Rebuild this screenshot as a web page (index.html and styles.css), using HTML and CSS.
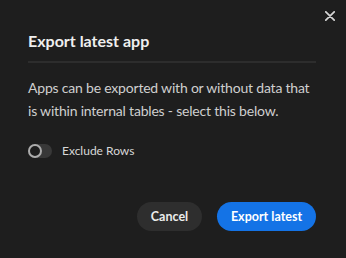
FILE: index.html
```html
<!DOCTYPE html>
<html lang="en">
<head>
    <meta charset="UTF-8">
    <meta name="viewport" content="width=device-width, initial-scale=1.0">
    <title>Export latest app</title>
    <link rel="stylesheet" href="styles.css">
</head>
<body>
    <div class="dialog">
        <!-- close -->
        <button class="close-btn" aria-label="Close">
            <svg width="10" height="10" viewBox="0 0 10 10">
                <path d="M0.8 0.8 L9.2 9.2 M9.2 0.8 L0.8 9.2" stroke="#d6d6d6" stroke-width="1.7" stroke-linecap="round"/>
            </svg>
        </button>

        <div class="heading">Export latest app</div>
        <div class="divider"></div>

        <div class="content">
            <p class="desc">Apps can be exported with or without data that is within internal tables - select this below.</p>
            <label class="switch-row">
                <span class="switch"><span class="handle"></span></span>
                <span class="switch-label">Exclude Rows</span>
            </label>
        </div>

        <div class="actions">
            <button class="btn btn-secondary">Cancel</button>
            <button class="btn btn-primary">Export latest</button>
        </div>
    </div>
</body>
</html>
```

FILE: styles.css
```css
* {
    margin: 0;
    padding: 0;
    box-sizing: border-box;
    font-family: Lato, "Noto Sans", sans-serif;
}
body {
    width: 100vw;
    height: 100vh;
    background: #1e1e1e;
    overflow: hidden;
}
.dialog {
    position: relative;
    height: 100%;
    padding: 30px 30px 0 28px;
    display: flex;
    flex-direction: column;
}
.close-btn {
    position: absolute;
    top: 11px;
    right: 11px;
    width: 10px;
    height: 10px;
    border: none;
    background: transparent;
    display: flex;
}
.heading {
    font-size: 16px;
    line-height: 22px;
    font-weight: bold;
    color: #efefef;
}
.divider {
    height: 2px;
    background: #2d2d2d;
    margin-top: 9px;
}
.content {
    margin-top: 13px;
}
.desc {
    font-size: 14px;
    line-height: 23px;
    letter-spacing: -0.2px;
    color: #cfcfcf;
}
.switch-row {
    display: flex;
    align-items: center;
    gap: 10px;
    margin-top: 20px;
}
.switch {
    position: relative;
    width: 24px;
    height: 14px;
    border-radius: 7px;
    background: #383838;
}
.handle {
    position: absolute;
    left: 0;
    top: 0;
    width: 14px;
    height: 14px;
    border-radius: 50%;
    border: 2px solid #acacac;
    background: #1e1e1e;
}
.switch-label {
    font-size: 12px;
    line-height: 18px;
    color: #d8d8d8;
}
.actions {
    display: flex;
    justify-content: flex-end;
    gap: 15px;
    margin-top: 42px;
}
.btn {
    height: 29px;
    border: none;
    border-radius: 15px;
    display: flex;
    justify-content: center;
    align-items: center;
    font-size: 12.5px;
    font-weight: bold;
    color: #ececec;
}
.btn-secondary {
    width: 65px;
    background: #2e2e2e;
}
.btn-primary {
    width: 99px;
    background: #1473e6;
    color: #ffffff;
}
```
